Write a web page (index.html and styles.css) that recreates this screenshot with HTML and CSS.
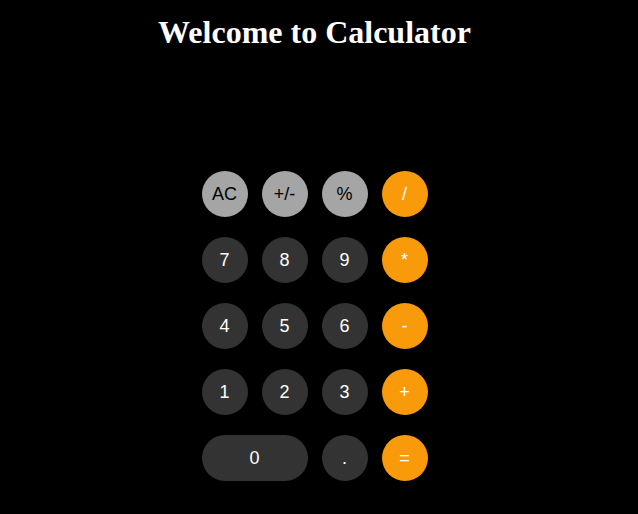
FILE: index.html
```html
<!DOCTYPE html>
<html>
<head>
<meta charset="utf-8">
<link rel="stylesheet" href="styles.css">
</head>
<body>
<h1 class="title">Welcome to Calculator</h1>
<div class="calc">
  <button class="key light">AC</button>
  <button class="key light">+/-</button>
  <button class="key light">%</button>
  <button class="key op">/</button>
  <button class="key dark">7</button>
  <button class="key dark">8</button>
  <button class="key dark">9</button>
  <button class="key op">*</button>
  <button class="key dark">4</button>
  <button class="key dark">5</button>
  <button class="key dark">6</button>
  <button class="key op">-</button>
  <button class="key dark">1</button>
  <button class="key dark">2</button>
  <button class="key dark">3</button>
  <button class="key op">+</button>
  <button class="key dark wide">0</button>
  <button class="key dark">.</button>
  <button class="key op">=</button>
</div>
</body>
</html>
```
FILE: styles.css
```css
html, body {
  margin: 0;
  padding: 0;
  background: #000;
}
body {
  font-family: "Liberation Serif", serif;
  color: #fff;
  padding-right: 9px;
}
.title {
  margin: 0;
  padding-top: 14px;
  text-align: center;
  font-size: 32px;
  font-weight: bold;
  line-height: 37px;
}
.calc {
  width: 226px;
  margin: 120px auto 0;
  display: grid;
  grid-template-columns: repeat(4, 46px);
  grid-auto-rows: 46px;
  column-gap: 14px;
  row-gap: 20px;
}
.key {
  border: none;
  border-radius: 23px;
  padding: 0;
  margin: 0;
  font-family: "Liberation Sans", Arial, sans-serif;
  font-size: 18px;
  cursor: pointer;
}
.light {
  background: #a5a5a5;
  color: #000;
}
.dark {
  background: #333;
  color: #fff;
}
.op {
  background: #f89a0a;
  color: #fff;
}
.wide {
  grid-column: span 2;
}
```
